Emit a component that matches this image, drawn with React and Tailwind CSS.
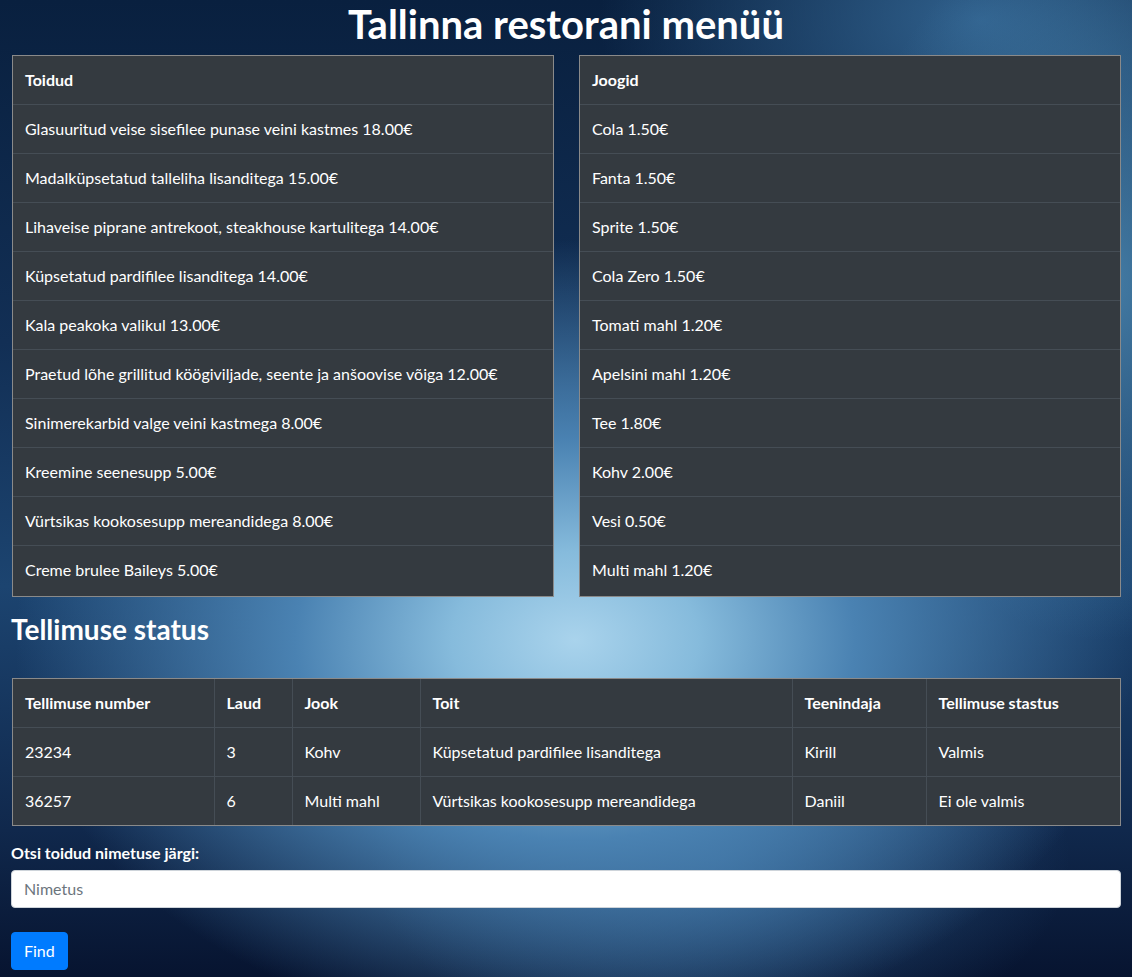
import React from "react";

const foods = [
  "Glasuuritud veise sisefilee punase veini kastmes 18.00€",
  "Madalküpsetatud talleliha lisanditega 15.00€",
  "Lihaveise piprane antrekoot, steakhouse kartulitega 14.00€",
  "Küpsetatud pardifilee lisanditega 14.00€",
  "Kala peakoka valikul 13.00€",
  "Praetud lõhe grillitud köögiviljade, seente ja anšoovise võiga 12.00€",
  "Sinimerekarbid valge veini kastmega 8.00€",
  "Kreemine seenesupp 5.00€",
  "Vürtsikas kookosesupp mereandidega 8.00€",
  "Creme brulee Baileys 5.00€",
];

const drinks = [
  "Cola 1.50€",
  "Fanta 1.50€",
  "Sprite 1.50€",
  "Cola Zero 1.50€",
  "Tomati mahl 1.20€",
  "Apelsini mahl 1.20€",
  "Tee 1.80€",
  "Kohv 2.00€",
  "Vesi 0.50€",
  "Multi mahl 1.20€",
];

const orderHead = ["Tellimuse number", "Laud", "Jook", "Toit", "Teenindaja", "Tellimuse stastus"];
const orders = [
  ["23234", "3", "Kohv", "Küpsetatud pardifilee lisanditega", "Kirill", "Valmis"],
  ["36257", "6", "Multi mahl", "Vürtsikas kookosesupp mereandidega", "Daniil", "Ei ole valmis"],
];

function MenuTable({ title, items }) {
  return (
    <div className="border border-[#8a8a8a] bg-[#343a40] pb-[2px]">
      <table className="w-full border-collapse">
        <thead>
          <tr>
            <th className="border-b border-[#454d55] px-3 py-3 text-left font-bold leading-6 text-white">{title}</th>
          </tr>
        </thead>
        <tbody>
          {items.map((it, i) => (
            <tr key={it}>
              <td className={`${i > 0 ? "border-t" : ""} border-[#454d55] px-3 py-3 leading-6 text-white`}>{it}</td>
            </tr>
          ))}
        </tbody>
      </table>
    </div>
  );
}

export default function App() {
  return (
    <div
      className="min-h-screen w-full pb-[7px] text-white bg-[radial-gradient(ellipse_560px_400px_at_575px_640px,#a9d3ec_0%,#86bbdc_22%,#4a82b2_50%,rgba(25,60,105,0)_100%),radial-gradient(ellipse_260px_360px_at_1100px_280px,rgba(78,140,182,0.85)_0%,rgba(50,100,150,0)_100%),radial-gradient(ellipse_380px_240px_at_980px_20px,rgba(50,100,145,0.95)_0%,rgba(40,90,140,0)_100%),radial-gradient(ellipse_350px_200px_at_720px_860px,rgba(50,100,150,0.75)_0%,rgba(40,90,140,0)_100%),linear-gradient(180deg,#09203f_0%,#122f55_35%,#1c4470_60%,#10284c_85%,#071430_100%)]"
      style={{ fontFamily: "Lato, 'Noto Sans', sans-serif" }}
    >
      <h1 className="mb-[7px] text-center text-[40px] font-bold leading-[48px] text-white">
        Tallinna restorani menüü
      </h1>

      <div className="px-[11px]">
        <div className="ml-px grid grid-cols-2 gap-[25px]">
          <MenuTable title="Toidud" items={foods} />
          <MenuTable title="Joogid" items={drinks} />
        </div>

        <h3 className="mt-4 mb-[31px] text-[28px] font-bold leading-[33.6px] text-white">Tellimuse status</h3>

        <div className="ml-px border border-[#8a8a8a] bg-[#343a40]">
          <table className="w-full table-fixed border-collapse">
            <colgroup>
              <col className="w-[201px]" />
              <col className="w-[78px]" />
              <col className="w-[128px]" />
              <col className="w-[372px]" />
              <col className="w-[134px]" />
              <col />
            </colgroup>
            <thead>
              <tr>
                {orderHead.map((h, i) => (
                  <th
                    key={h}
                    className={`border-b border-[#454d55] px-3 py-3 text-left font-bold leading-6 text-white ${i > 0 ? "border-l" : ""}`}
                  >
                    {h}
                  </th>
                ))}
              </tr>
            </thead>
            <tbody>
              {orders.map((row, r) => (
                <tr key={row[0]}>
                  {row.map((c, i) => (
                    <td
                      key={i}
                      className={`${r > 0 ? "border-t" : ""} border-[#454d55] px-3 py-3 leading-6 text-white ${i > 0 ? "border-l" : ""}`}
                    >
                      {c}
                    </td>
                  ))}
                </tr>
              ))}
            </tbody>
          </table>
        </div>

        <label className="mt-[15px] mb-[5px] block font-bold leading-6 text-white">
          Otsi toidud nimetuse järgi:
        </label>
        <input
          type="text"
          placeholder="Nimetus"
          className="block h-[38px] w-full rounded-[4px] border border-[#ced4da] bg-white px-3 text-base text-[#495057] placeholder:text-[#6c757d] outline-none"
        />
        <button className="mt-6 h-[38px] rounded-[4px] border border-[#007bff] bg-[#007bff] px-3 text-base leading-6 text-white">
          Find
        </button>
      </div>
    </div>
  );
}
